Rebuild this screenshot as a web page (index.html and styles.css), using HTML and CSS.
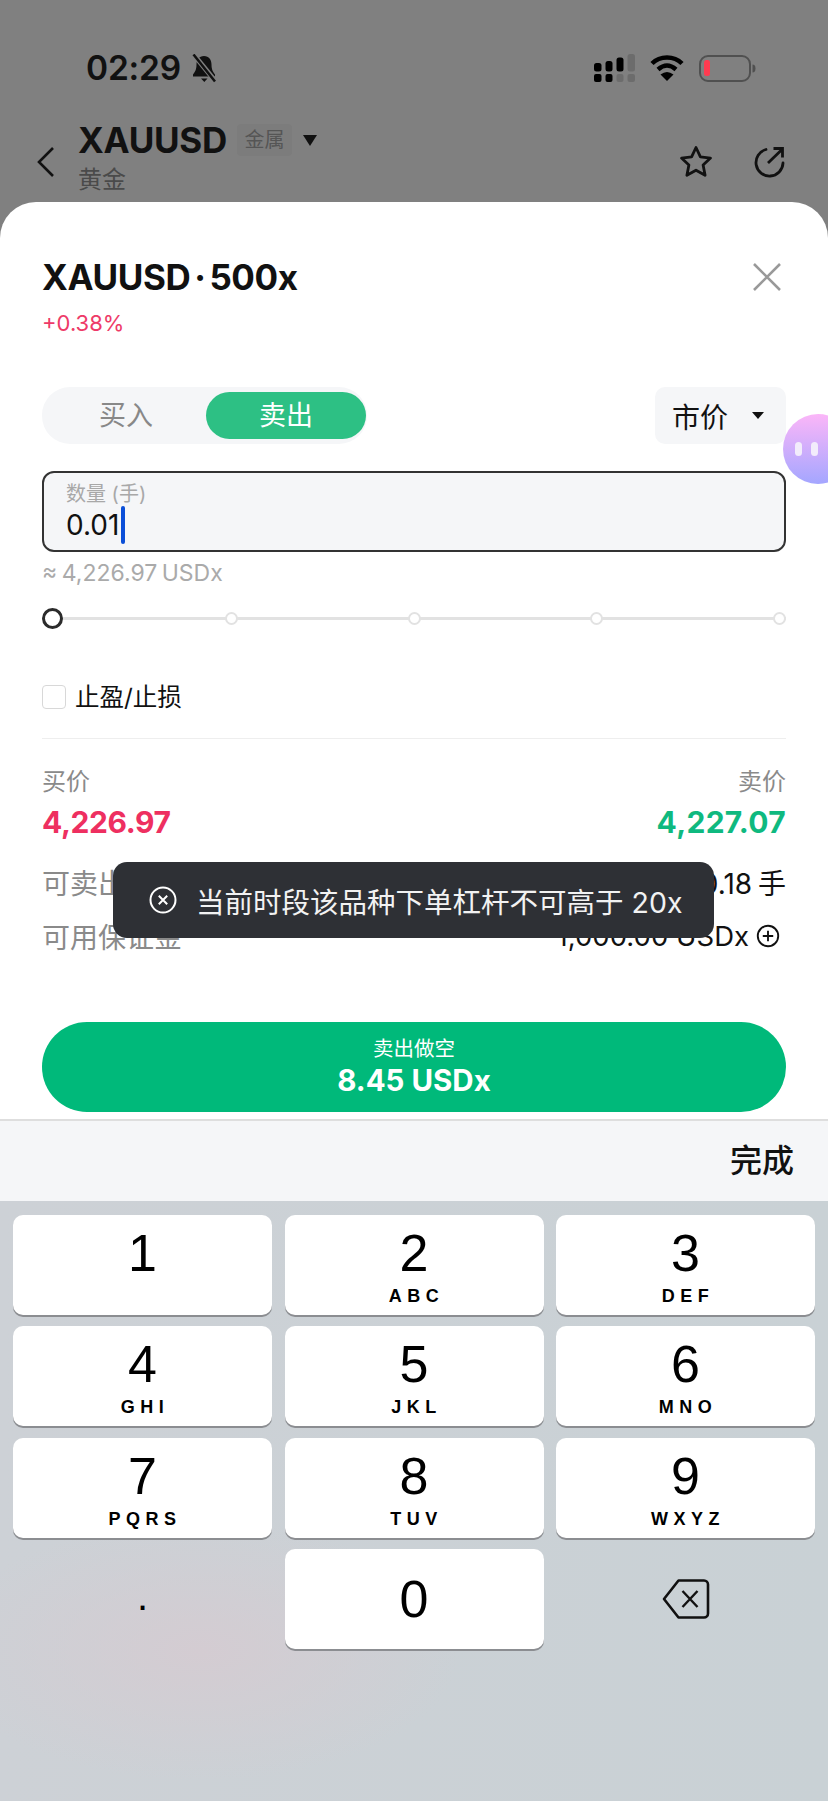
FILE: index.html
```html
<!DOCTYPE html>
<html>
<head>
  <meta charset="utf-8">
  <title>XAUUSD</title>
  <link rel="stylesheet" href="styles.css">
</head>
<body>
  <div class="page">
    <!-- dimmed part behind the sheet -->
    <div class="backdrop">
      <div class="statusbar">
        <span class="time">02:29</span>
        <svg class="bell" width="27" height="29" viewBox="0 0 27 29">
          <path d="M13 2c-5 0-7.500 4-7.500 8.500 0 5-1.500 7.500-3.500 10v2h22v-2c-2-2.500-3.500-5-3.500-10C20.500 6 18 2 13 2z" fill="#111"/>
          <path d="M10 24.500h6.500l-3.200 3.500z" fill="#111"/>
          <path d="M3 1l22 27" stroke="#808080" stroke-width="5"/>
          <path d="M2.500 0.500l21.500 27" stroke="#111" stroke-width="2.500"/>
        </svg>
        <div class="status-icons">
          <svg width="41" height="28" viewBox="0 0 41 28">
            <rect x="0" y="9" width="7.500" height="8.500" rx="2.500" fill="#000"/>
            <rect x="11.500" y="7" width="7" height="10.500" rx="2.500" fill="#000"/>
            <rect x="22.500" y="3.500" width="7" height="14" rx="2.500" fill="#000"/>
            <rect x="33.500" y="0" width="7.500" height="17.500" rx="2.500" fill="#6c6c6c"/>
            <rect x="0" y="20" width="7.500" height="8" rx="2" fill="#000"/>
            <rect x="11.500" y="20" width="7" height="8" rx="2" fill="#000"/>
            <rect x="22.500" y="20" width="7" height="8" rx="2" fill="#6c6c6c"/>
            <rect x="33.500" y="20" width="7.500" height="8" rx="2" fill="#6c6c6c"/>
          </svg>
          <svg class="wifi" width="34" height="26" viewBox="0 0 34 26">
            <path d="M2 8.500C10 .5 24 .5 32 8.500" fill="none" stroke="#000" stroke-width="4.500"/>
            <path d="M8 14.500Q17 6.500 26 14.500" fill="none" stroke="#000" stroke-width="4.500"/>
            <path d="M17 26l-6.500-6.500Q17 14.500 23.500 19.500z" fill="#000"/>
          </svg>
          <svg class="battery" width="57" height="27" viewBox="0 0 57 27">
            <rect x="1" y="1" width="50" height="25" rx="8" fill="none" stroke="#505050" stroke-width="2"/>
            <rect x="5" y="5" width="6" height="16" rx="2.500" fill="#ff3b50"/>
            <path d="M53.500 9.500c2 0 3 1.500 3 4s-1 4-3 4z" fill="#505050"/>
          </svg>
        </div>
      </div>

      <div class="navbar">
        <svg class="back" width="18" height="32" viewBox="0 0 18 32">
          <path d="M16 2L2 16l14 14" fill="none" stroke="#111" stroke-width="2.600"/>
        </svg>
        <div class="nav-title">
          <div class="nav-symbol">
            <span class="nav-name">XAUUSD</span>
            <span class="nav-tag">金属</span>
            <span class="caret caret-lg"></span>
          </div>
          <div class="nav-sub">黄金</div>
        </div>
        <svg class="star" width="34" height="34" viewBox="0 0 34 34">
          <path d="M17 2.500l4.400 9.400 10.100 1.200-7.400 7 2 10.200-9.100-5.100-9.100 5.100 2-10.200-7.400-7 10.100-1.200z" fill="none" stroke="#111" stroke-width="2.800" stroke-linejoin="round"/>
        </svg>
        <svg class="share" width="32" height="32" viewBox="0 0 32 32">
          <path d="M13 3.500A13.500 13.500 0 1 0 30 17" fill="none" stroke="#111" stroke-width="2.800" stroke-linecap="round"/>
          <path d="M15 17L29 3.500M20.500 2.500h9v9" fill="none" stroke="#111" stroke-width="2.800"/>
        </svg>
      </div>
    </div>

    <!-- order sheet -->
    <div class="sheet">
      <div class="sheet-head">
        <h1>XAUUSD · 500x</h1>
        <svg width="30" height="30" viewBox="0 0 30 30">
          <path d="M2 2l26 26M28 2L2 28" stroke="#999" stroke-width="2.600"/>
        </svg>
      </div>
      <div class="change">+0.38%</div>

      <div class="order-row">
        <div class="side-toggle">
          <span class="side">买入</span>
          <span class="side active">卖出</span>
        </div>
        <div class="order-type">
          <span>市价</span>
          <span class="caret"></span>
        </div>
      </div>

      <div class="qty-box">
        <div class="qty-label">数量 (手)</div>
        <div class="qty-value">0.01<span class="cursor"></span></div>
      </div>
      <div class="approx">≈ 4,226.97 USDx</div>

      <div class="slider">
        <span class="thumb"></span>
        <span class="dot"></span>
        <span class="dot"></span>
        <span class="dot"></span>
        <span class="dot"></span>
      </div>

      <label class="tp-row">
        <span class="checkbox"></span>
        <span class="tp-text">止盈/止损</span>
      </label>
      <div class="divider"></div>

      <div class="row quote-labels">
        <span>买价</span>
        <span>卖价</span>
      </div>
      <div class="row quote-prices">
        <span class="red">4,226.97</span>
        <span class="green">4,227.07</span>
      </div>

      <div class="row info first">
        <span class="info-label">可卖出</span>
        <span class="lots">0.18 手</span>
      </div>
      <div class="row info">
        <span class="info-label">可用保证金</span>
        <span class="margin-val">1,000.00 USDx
          <svg width="24" height="24" viewBox="0 0 23 23">
            <circle cx="11.500" cy="11.500" r="9.800" fill="none" stroke="#111" stroke-width="1.800"/>
            <path d="M6.500 11.500h10M11.500 6.500v10" stroke="#111" stroke-width="1.800"/>
          </svg>
        </span>
      </div>

      <div class="submit">
        <div class="submit-label">卖出做空</div>
        <div class="submit-amount">8.45 USDx</div>
      </div>
    </div>

    <!-- keyboard -->
    <div class="kb-toolbar"><span>完成</span></div>
    <div class="keyboard">
      <div class="key"><span class="digit">1</span></div>
      <div class="key"><span class="digit">2</span><span class="letters">ABC</span></div>
      <div class="key"><span class="digit">3</span><span class="letters">DEF</span></div>
      <div class="key"><span class="digit">4</span><span class="letters">GHI</span></div>
      <div class="key"><span class="digit">5</span><span class="letters">JKL</span></div>
      <div class="key"><span class="digit">6</span><span class="letters">MNO</span></div>
      <div class="key"><span class="digit">7</span><span class="letters">PQRS</span></div>
      <div class="key"><span class="digit">8</span><span class="letters">TUV</span></div>
      <div class="key"><span class="digit">9</span><span class="letters">WXYZ</span></div>
      <div class="key-flat period">.</div>
      <div class="key zero"><span class="digit">0</span></div>
      <div class="key-flat">
        <svg width="48" height="40" viewBox="0 0 48 40">
          <path d="M16.500 1.500H42a4 4 0 0 1 4 4v29a4 4 0 0 1-4 4H16.500L2 20z" fill="none" stroke="#111" stroke-width="2.600" stroke-linejoin="round"/>
          <path d="M20.500 12l15 16M35.500 12l-15 16" stroke="#111" stroke-width="2.400"/>
        </svg>
      </div>
    </div>

    <!-- things on top of the sheet -->
    <div class="bubble">
      <span class="eye"></span>
      <span class="eye"></span>
    </div>
    <div class="toast">
      <svg width="28" height="28" viewBox="0 0 28 28">
        <circle cx="14" cy="14" r="12.500" fill="none" stroke="#fff" stroke-width="2"/>
        <path d="M9.800 9.800l8.400 8.400M18.200 9.800l-8.400 8.400" stroke="#fff" stroke-width="2"/>
      </svg>
      <span>当前时段该品种下单杠杆不可高于 20x</span>
    </div>
  </div>
</body>
</html>
```

FILE: styles.css
```css
* {
  box-sizing: border-box;
}

body {
  margin: 0;
  font-family: Inter, "Noto Sans CJK SC", sans-serif;
  color: #111;
}

.page {
  position: relative;
  width: 828px;
  height: 1801px;
  overflow: hidden;
  background: #808080;
}

/* top, dimmed */
.backdrop {
  height: 202px;
}

.statusbar {
  display: flex;
  align-items: center;
  height: 56px;
  padding: 40px 0 0 86px;
  box-sizing: content-box;
}

.time {
  font-size: 33.500px;
  font-weight: 600;
  line-height: 56px;
  letter-spacing: -0.2px;
  color: #111;
  width: 105px;
}

.status-icons {
  display: flex;
  align-items: center;
  margin-left: 376px;
}

.wifi {
  margin-left: 15px;
}

.battery {
  margin-left: 15px;
}

.navbar {
  display: flex;
  align-items: flex-start;
  padding: 13px 0 0 37px;
}

.back {
  margin: 37px 0 0 0;
}

.nav-title {
  margin: 8px 0 0 23px;
  width: 601px;
}

.nav-symbol {
  display: flex;
  align-items: center;
  height: 46px;
}

.nav-name {
  font-size: 35px;
  font-weight: 700;
  letter-spacing: -0.3px;
  color: #111;
  width: 159px;
}

.nav-tag {
  width: 55px;
  height: 32px;
  line-height: 32px;
  text-align: center;
  font-size: 20px;
  color: #555;
  background: #7c7c7c;
  border-radius: 4px;
}

.caret {
  display: inline-block;
  width: 0;
  height: 0;
  border-style: solid;
  border-width: 7px 6px 0;
  border-color: #111 transparent transparent;
}

.caret-lg {
  border-width: 11px 7px 0;
  margin-left: 11px;
}

.nav-sub {
  font-size: 24px;
  line-height: 30px;
  margin-top: 2px;
  color: #4a4a4a;
}

.star {
  margin: 36px 0 0 0;
}

.share {
  margin: 37px 0 0 40px;
}

/* sheet */
.sheet {
  height: 917px;
  padding: 53px 42px 7px;
  background: #fff;
  border-radius: 36px 36px 0 0;
}

.sheet-head {
  display: flex;
  justify-content: space-between;
  align-items: center;
  height: 44px;
  padding-right: 4px;
}

h1 {
  margin: 0;
  font-size: 35px;
  font-weight: 700;
  letter-spacing: -0.4px;
  word-spacing: -4px;
}

.change {
  margin-top: 10px;
  font-size: 22px;
  line-height: 28px;
  color: #ee3a68;
}

.order-row {
  display: flex;
  justify-content: space-between;
  margin-top: 50px;
}

.side-toggle {
  display: flex;
  width: 325px;
  height: 57px;
  padding: 5px 1px 5px 4px;
  background: #f5f6f8;
  border-radius: 28px;
}

.side {
  flex: 1;
  text-align: center;
  font-size: 27px;
  line-height: 47px;
  color: #888;
}

.side.active {
  flex: none;
  width: 160px;
  background: #2dc084;
  color: #fff;
  border-radius: 24px;
}

.order-type {
  display: flex;
  align-items: center;
  justify-content: space-between;
  width: 131px;
  height: 57px;
  padding: 0 22px 0 17px;
  background: #f5f6f8;
  border-radius: 10px;
  font-size: 28px;
}

.qty-box {
  height: 81px;
  margin-top: 27px;
  padding: 9px 22px;
  background: #f5f6f8;
  border: 2px solid #333;
  border-radius: 12px;
}

.qty-label {
  font-size: 20px;
  line-height: 24px;
  color: #a8a8a8;
}

.qty-value {
  display: flex;
  align-items: center;
  height: 38px;
  font-size: 28px;
}

.cursor {
  width: 4px;
  height: 38px;
  margin-left: 2px;
  background: #0b4fd8;
  border-radius: 2px;
}

.approx {
  margin-top: 7px;
  font-size: 23px;
  line-height: 28px;
  word-spacing: -2px;
  color: #aaa;
}

.slider {
  display: flex;
  justify-content: space-between;
  align-items: center;
  height: 22px;
  margin-top: 20px;
  background: linear-gradient(#e2e2e2, #e2e2e2) center / 100% 3px no-repeat;
}

.thumb {
  width: 21px;
  height: 21px;
  margin-right: -8px;
  background: #fff;
  border: 3.500px solid #2b2b2b;
  border-radius: 50%;
}

.dot {
  width: 13px;
  height: 13px;
  background: #fff;
  border: 2px solid #e2e2e2;
  border-radius: 50%;
}

.tp-row {
  display: flex;
  align-items: center;
  height: 28px;
  margin-top: 54px;
  font-size: 24.500px;
}

.tp-text {
  padding-bottom: 4px;
}

.checkbox {
  width: 24px;
  height: 24px;
  margin-right: 9px;
  border: 1.500px solid #d8d8d8;
  border-radius: 4px;
}

.divider {
  height: 1px;
  margin-top: 27px;
  background: #eee;
}

.row {
  display: flex;
  justify-content: space-between;
  align-items: center;
}

.quote-labels {
  height: 30px;
  margin-top: 25px;
  font-size: 24px;
  color: #8a8a8a;
}

.quote-prices {
  height: 36px;
  margin-top: 10px;
  font-size: 30px;
  font-weight: 700;
  letter-spacing: -0.4px;
}

.red {
  color: #ee2f60;
}

.green {
  color: #0fb97f;
  letter-spacing: 0.3px;
}

.info {
  height: 30px;
  margin-top: 24px;
  font-size: 27.500px;
}

.info.first {
  margin-top: 27px;
}

.info-label {
  font-size: 28px;
  color: #8a8a8a;
}

.lots {
  font-size: 28px;
  word-spacing: -2px;
}

.margin-val {
  display: flex;
  align-items: center;
  gap: 7px;
  padding-right: 6px;
}

.submit {
  height: 90px;
  margin-top: 71px;
  padding-top: 14px;
  background: #00b97a;
  border-radius: 45px;
  color: #fff;
  text-align: center;
}

.submit-label {
  font-size: 20.500px;
  line-height: 26px;
}

.submit-amount {
  font-size: 29.500px;
  font-weight: 700;
  line-height: 36px;
}

/* keyboard */
.kb-toolbar {
  height: 82px;
  padding: 0 34px 0 0;
  background: #f5f6f8;
  border-top: 2px solid #dedede;
  font-size: 32px;
  font-weight: 500;
  line-height: 80px;
  text-align: right;
}

.keyboard {
  display: grid;
  grid-template-columns: repeat(3, 259px);
  grid-auto-rows: 100px;
  gap: 11.300px 12.500px;
  height: 600px;
  padding: 14px 13px 0;
  background:
    radial-gradient(ellipse 260px 130px at 200px 450px, #d4ccd2, transparent),
    linear-gradient(90deg, #cdd1d6, #c9d1d5);
}

.key {
  display: flex;
  flex-direction: column;
  align-items: center;
  padding-top: 14px;
  background: #fff;
  border-radius: 10px;
  box-shadow: 0 2px 0 #8b8d91;
}

.digit {
  font-family: "Liberation Sans", sans-serif;
  font-size: 52px;
  line-height: 48px;
  color: #000;
}

.letters {
  margin-top: 9px;
  padding-left: 5px;
  font-family: "Liberation Sans", sans-serif;
  font-size: 18px;
  font-weight: 700;
  line-height: 20px;
  letter-spacing: 5.500px;
  color: #000;
}

.key.zero {
  justify-content: center;
  padding-top: 0;
}

.key-flat {
  display: flex;
  align-items: center;
  justify-content: center;
}

.period {
  padding-bottom: 4px;
  font-family: "Liberation Sans", sans-serif;
  font-size: 40px;
  color: #000;
}

/* overlays */
.bubble {
  position: absolute;
  left: 783px;
  top: 414px;
  display: flex;
  gap: 9px;
  align-items: center;
  width: 70px;
  height: 70px;
  padding-left: 12px;
  background: linear-gradient(#fbb6f8, #a4a6ff);
  border-radius: 50%;
}

.eye {
  width: 7px;
  height: 14px;
  background: #f2ecfb;
  border-radius: 4px;
}

.toast {
  position: absolute;
  left: 113px;
  top: 862px;
  display: flex;
  align-items: center;
  gap: 19px;
  width: 601px;
  height: 76px;
  padding-left: 36px;
  background: #2e3035;
  border-radius: 14px;
  color: #f2f2f2;
  font-size: 28.500px;
}
```
